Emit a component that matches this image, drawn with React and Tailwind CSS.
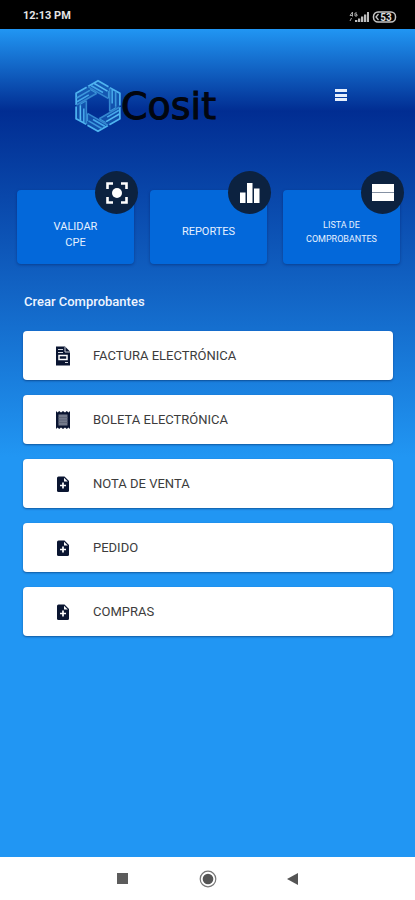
import React from "react";

const HEX_TURNS = [0, 60, 120, 180, 240, 300];

function Logo() {
  return (
    <div className="flex items-center" role="img" aria-label="Cosit">
      <svg viewBox="-23 -27 46 54" className="h-[54px] w-[46px]" fill="none">
        {HEX_TURNS.map((turn, i) => (
          <g key={turn} transform={`rotate(${turn})`}>
            <path d="M-10.500 -19.400L0 -25.500L11 -19V-7.300Z" fill="#1d66bb" fillOpacity="0.6" />
            <path d="M-10 -19.400L0 -25.300L10.500 -19.200" stroke="#4fb4f0" strokeWidth="1.700" />
            <path d="M-3.700 -22.500L9.500 -14.900" stroke={i % 2 ? "#3c97dc" : "#55b9f3"} strokeWidth="1.600" />
            <path d="M-6.800 -20.300L5 -13.500" stroke="#46a8ea" strokeWidth="1.600" />
            <path d="M-10 -19.200L10.500 -7.400" stroke="#3487d0" strokeWidth="1.600" />
            <path d="M10.500 -15V-8" stroke="#3c97dc" strokeWidth="1.200" />
          </g>
        ))}
      </svg>
      <span className="font-['DejaVu_Sans',sans-serif] text-[38px] leading-[54px] text-[#02060f] [-webkit-text-stroke:1px_#02060f]">Cosit</span>
    </div>
  );
}

function StatusBar() {
  return (
    <header className="flex h-[29px] items-center justify-between bg-black pr-[18px] pl-[23px] pt-1 text-[#e4e4e4]">
      <span className="text-[11px] font-bold">12:13 PM</span>
      <div className="flex items-center gap-[3px]">
        <svg viewBox="0 0 20 12" className="h-3 w-5" fill="#bdbdbd">
          <path d="M1 4.500L3.500 1V5.500M1 4.500H4M8 2H6V5H8V3.500H7M2.500 7L1 10" fill="none" stroke="#a8a8a8" strokeWidth="1" />
          <path d="M6 9h2.300v2H6zM9 7.500h2.300V11H9zM12 5.500h2.300V11H12zM15 3.500h2.300V11H15zM18 1h2v10h-2z" />
        </svg>
        <svg viewBox="0 0 25 12" className="h-3 w-[25px]">
          <rect x="1.500" y="1" width="22" height="10" rx="4.500" fill="none" stroke="#c4c4c4" strokeWidth="1.500" />
          <path d="M6.500 3L4 6L6.500 9" fill="none" stroke="#c4c4c4" strokeWidth="1.300" />
          <text x="14" y="9.500" textAnchor="middle" fill="#dedede" fontSize="10" fontWeight="700" fontFamily="Roboto, sans-serif">53</text>
        </svg>
      </div>
    </header>
  );
}

function ScanIcon() {
  return (
    <svg viewBox="0 0 22 22" className="size-[22px]">
      <path d="M1.500 7V1.500H7M15 1.500H20.500V7M20.500 15V20.500H15M7 20.500H1.500V15" fill="none" stroke="white" strokeWidth="2.600" />
      <circle cx="11" cy="11" r="5" fill="white" />
    </svg>
  );
}

function BarsIcon() {
  return (
    <svg viewBox="0 0 20 20" className="size-5" fill="white">
      <path d="M0 9.500h5.500V20H0zM7 0h5.500v20H7zM14 5.500h5.500V20H14z" />
    </svg>
  );
}

function ListIcon() {
  return (
    <svg viewBox="0 0 22 17" className="h-[17px] w-[22px]" fill="white">
      <path d="M0 0h22v8H0zM0 9h22v8H0z" />
      <path d="M0 8h22v1H0z" fill="#8591a3" />
    </svg>
  );
}

function InvoiceIcon() {
  return (
    <svg viewBox="0 0 16 20" className="h-5 w-4">
      <path d="M1 0.500H10L15 5.500V19.500H1Z" fill="#0a1531" />
      <path d="M10 1V6H15" fill="none" stroke="#c9cdd6" />
      <path d="M3 3.500H8M3 6.500H8M10 16.500H13" stroke="#d5d8df" strokeWidth="1.200" />
      <rect x="4" y="9.500" width="8" height="4" fill="none" stroke="white" strokeWidth="1.500" />
    </svg>
  );
}

function ReceiptIcon() {
  return (
    <svg viewBox="0 0 16 20" className="h-5 w-4">
      <path d="M1 1L2.500 2.500L4.200 1L6 2.500L8 1L10 2.500L11.800 1L13.500 2.500L15 1V19L13.500 17.500L11.800 19L10 17.500L8 19L6 17.500L4.200 19L2.500 17.500L1 19Z" fill="#0a1531" />
      <path d="M3.500 4.500h9v11h-9z" fill="#747b8c" />
      <path d="M3.500 7.500h9M3.500 10h9M3.500 12.500h9" stroke="#596174" strokeWidth="0.800" />
    </svg>
  );
}

function AddFileIcon() {
  return (
    <svg viewBox="0 0 16 20" className="h-5 w-4">
      <path d="M3.500 2.500H9.500L14 7V16.500Q14 18 12.500 18H3.500Q2 18 2 16.500V4Q2 2.500 3.500 2.500Z" fill="#0a1531" />
      <path d="M9 3.700V7.500H12.800Z" fill="white" />
      <path d="M8 8.500V14.500M5 11.500H11" stroke="white" strokeWidth="1.700" />
    </svg>
  );
}

const shortcuts = [
  { id: "validar", lines: ["VALIDAR", "CPE"], Icon: ScanIcon, pad: "pt-4", text: "text-[11px] leading-4" },
  { id: "reportes", lines: ["REPORTES"], Icon: BarsIcon, pad: "pt-2.5", text: "text-[11px] leading-4" },
  { id: "lista", lines: ["LISTA DE", "COMPROBANTES"], Icon: ListIcon, pad: "pt-2.5", text: "text-[9px] leading-[14px]" },
];

const documents = [
  { label: "FACTURA ELECTRÓNICA", Icon: InvoiceIcon },
  { label: "BOLETA ELECTRÓNICA", Icon: ReceiptIcon },
  { label: "NOTA DE VENTA", Icon: AddFileIcon },
  { label: "PEDIDO", Icon: AddFileIcon },
  { label: "COMPRAS", Icon: AddFileIcon },
];

export default function App() {
  return (
    <div className="flex min-h-screen flex-col bg-white font-[Roboto,sans-serif]">
      <StatusBar />
      <main className="flex-1 bg-[linear-gradient(to_bottom,#2196f3_0px,#012d92_82px,#2196f3_428px)] pb-8">
        <div className="flex items-start justify-between pt-[50px] pr-[68px] pl-[75px]">
          <Logo />
          <button type="button" aria-label="Menú" className="mt-[10px] flex h-3 w-3 flex-col justify-between">
            <span className="h-[3px] w-full bg-[#e6effc]" />
            <span className="h-[3px] w-full bg-[#e6effc]" />
            <span className="h-[3px] w-full bg-[#e6effc]" />
          </button>
        </div>

        <nav className="mt-[57px] grid grid-cols-3 gap-4 pr-[15px] pl-[17px]">
          {shortcuts.map(({ id, lines, Icon, pad, text }) => (
            <button
              key={id}
              type="button"
              className={`relative flex h-[74px] flex-col items-center justify-center rounded-sm bg-[#0368da] text-[#e6f1ff] shadow-[0_1px_3px_rgba(0,20,80,0.4)] ${pad}`}
            >
              {lines.map((line) => (
                <span key={line} className={text}>{line}</span>
              ))}
              <span className="absolute -top-[19px] -right-1 flex size-[43px] items-center justify-center rounded-full bg-[#0c2240]">
                <Icon />
              </span>
            </button>
          ))}
        </nav>

        <h2 className="mt-7 px-6 text-[13px] leading-5 font-medium text-[#eef5ff]">Crear Comprobantes</h2>

        <ul className="mt-[19px] flex flex-col gap-[15px] pr-[22px] pl-[23px]">
          {documents.map(({ label, Icon }) => (
            <li key={label}>
              <button
                type="button"
                className="flex h-[49px] w-full items-center gap-[22px] rounded-sm bg-white pl-8 text-left text-[13px] text-[#3c3c3c] shadow-[0_1px_2px_rgba(0,30,80,0.5)]"
              >
                <Icon />
                <span>{label}</span>
              </button>
            </li>
          ))}
        </ul>
      </main>

      <footer className="flex h-[43px] items-center justify-center gap-[67px] bg-white">
        <button type="button" aria-label="Recientes" className="flex size-[18px] items-center justify-center">
          <span className="size-[11px] bg-[#5c5c5c]" />
        </button>
        <button type="button" aria-label="Inicio">
          <svg viewBox="0 0 18 18" className="size-[18px]">
            <circle cx="9" cy="9" r="7.800" fill="none" stroke="#777777" strokeWidth="1.200" />
            <circle cx="9" cy="9" r="5.300" fill="#555555" />
          </svg>
        </button>
        <button type="button" aria-label="Atrás">
          <svg viewBox="0 0 18 18" className="size-[18px]">
            <path d="M3 9L14 3V15Z" fill="#555555" />
          </svg>
        </button>
      </footer>
    </div>
  );
}
